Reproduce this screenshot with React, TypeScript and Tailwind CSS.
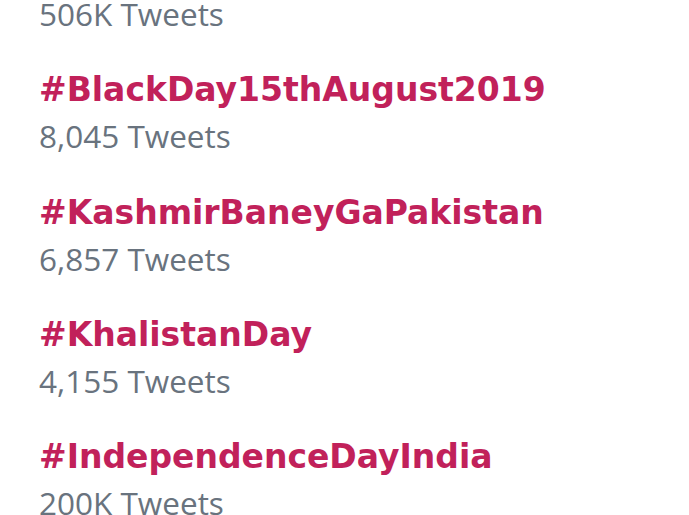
import React from "react";

const trends = [
  { tag: "#BlackDay15thAugust2019", count: "8,045 Tweets" },
  { tag: "#KashmirBaneyGaPakistan", count: "6,857 Tweets" },
  { tag: "#KhalistanDay", count: "4,155 Tweets" },
  { tag: "#IndependenceDayIndia", count: "200K Tweets" },
];

export default function App() {
  return (
    <div className="w-[689px] h-[515px] overflow-hidden bg-white pl-[39px]">
      <div className="flex flex-col">
        <div
          className="mt-[-4px] h-[36px] text-[31.5px] leading-[36px] text-[#69737e] whitespace-nowrap"
          style={{ fontFamily: '"Open Sans", sans-serif' }}
        >
          506K Tweets
        </div>
        {trends.map((t) => (
          <div key={t.tag} className="mt-[38.3px] flex flex-col">
            <div
              className="h-[40px] text-[33px] leading-[40px] font-bold text-[#c1215a] whitespace-nowrap"
              style={{ fontFamily: '"DejaVu Sans", Verdana, sans-serif' }}
            >
              {t.tag}
            </div>
            <div
              className="mt-[8px] h-[36px] text-[31.5px] leading-[36px] text-[#69737e] whitespace-nowrap"
              style={{ fontFamily: '"Open Sans", sans-serif' }}
            >
              {t.count}
            </div>
          </div>
        ))}
      </div>
    </div>
  );
}
